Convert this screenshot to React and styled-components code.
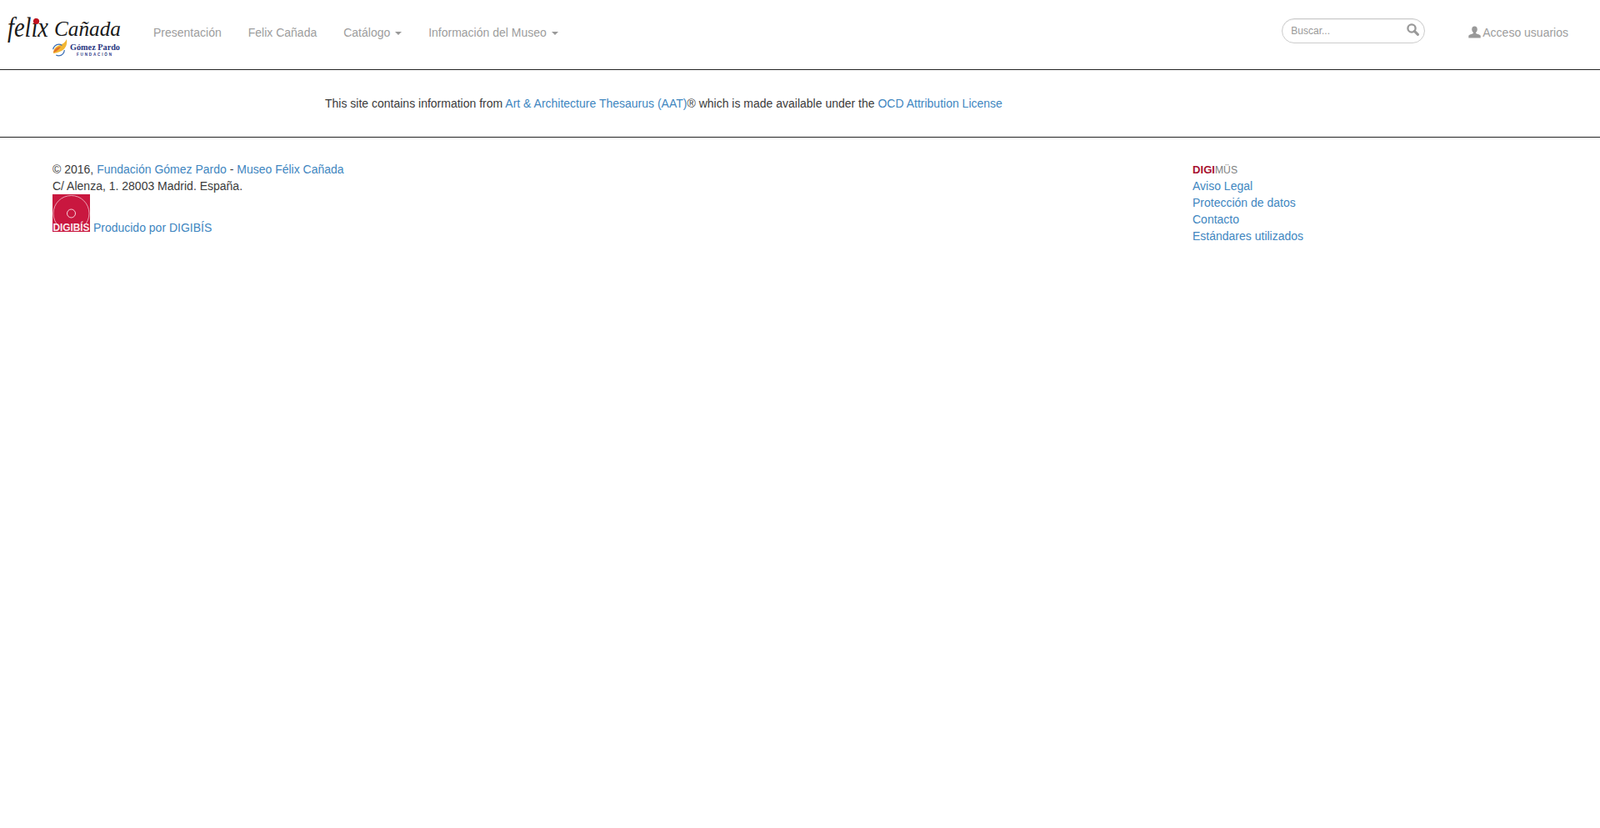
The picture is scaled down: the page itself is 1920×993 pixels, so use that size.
import React from "react";
import styled, { createGlobalStyle } from "styled-components";

const GlobalStyle = createGlobalStyle`
    html, body {
        margin: 0;
        padding: 0;
        background: #fff;
    }
    body {
        font-family: "Liberation Sans", Arial, sans-serif;
        font-size: 14px;
        line-height: 20px;
        color: #3a3a3a;
    }
    a {
        color: #4086bf;
        text-decoration: none;
    }
`;

const Navbar = styled.nav`
    display: flex;
    align-items: flex-start;
    height: 83px;
    border-bottom: 1px solid #222;
`;

const Brand = styled.a`
    display: block;
    flex: none;
    width: 168px;
    height: 83px;
`;

const NavList = styled.ul`
    display: flex;
    flex: 1;
    margin: 0;
    padding: 0;
    list-style: none;
`;

const NavLink = styled.a`
    display: block;
    padding: 29px 16px 0;
    color: #9d9d9d;
`;

const Caret = styled.span`
    display: inline-block;
    width: 0;
    height: 0;
    margin-left: 2px;
    vertical-align: middle;
    border-top: 4px solid #999;
    border-right: 4px solid transparent;
    border-left: 4px solid transparent;
`;

const SearchBox = styled.form`
    position: relative;
    flex: none;
    width: 172px;
    height: 30px;
    margin-top: 22px;
`;

const SearchInput = styled.input`
    box-sizing: border-box;
    width: 100%;
    height: 100%;
    padding: 0 28px 0 10px;
    border: 1px solid #ccc;
    border-radius: 15px;
    outline: none;
    font-family: inherit;
    font-size: 12px;
    color: #555;
    box-shadow: inset 0 1px 1px rgba(0, 0, 0, 0.075);
    &::placeholder {
        color: #999;
        opacity: 1;
    }
`;

const SearchIcon = styled.svg`
    position: absolute;
    top: 6px;
    right: 7px;
    width: 15px;
    height: 15px;
`;

const UserLink = styled.a`
    display: flex;
    flex: none;
    align-items: center;
    gap: 2px;
    margin-left: 52px;
    padding: 29px 38px 0 0;
    color: #9d9d9d;
`;

const UserIcon = styled.svg`
    width: 15px;
    height: 15px;
    margin-top: -1px;
`;

const Notice = styled.section`
    padding: 30px 0 30px 390px;
    border-bottom: 1px solid #222;
`;

const Footer = styled.footer`
    display: flex;
    justify-content: space-between;
    padding: 28px 0 0 63px;
`;

const FooterLeft = styled.div`
    width: 600px;
`;

const FooterRight = styled.div`
    width: 489px;
`;

const FooterLine = styled.div`
    height: 20px;
`;

const DigibisMark = styled.svg`
    width: 45px;
    height: 45px;
    overflow: visible;
`;

const Digimus = styled.svg`
    display: block;
    width: 56px;
    height: 20px;
`;

const Logo = () => (
    <svg width="168" height="83" viewBox="0 0 168 83">
        <g fontFamily='"Liberation Serif", serif' fontStyle="italic" fill="#1a1a1a">
            <text x="9" y="44" fontSize="34" textLength="49" lengthAdjust="spacingAndGlyphs">felix</text>
            <text x="65" y="43" fontSize="25" textLength="80" lengthAdjust="spacingAndGlyphs">Cañada</text>
        </g>
        <circle cx="43.5" cy="25.5" r="3.6" fill="#c1121f" />
        <path d="M80 47c1 6-1 11-6 14-4 2-8 3-10 3 0-6 4-9 8-10 3-1 6-3 8-7z" fill="#f2b632" />
        <path d="M64 63c1-4 5-7 9-7-2 3-5 6-9 7z" fill="#e2702a" />
        <circle cx="70.5" cy="60" r="6.8" fill="none" stroke="#3c6fb4" strokeWidth="1.2" strokeDasharray="14 8" />
        <text x="84" y="60" fontFamily='"Liberation Serif", serif' fontWeight="700" fontSize="9.5" fill="#27347f" textLength="60" lengthAdjust="spacingAndGlyphs">Gómez Pardo</text>
        <text x="92" y="66.5" fontFamily='"Liberation Sans", sans-serif' fontWeight="700" fontSize="4.5" fill="#27347f" textLength="42">FUNDACIÓN</text>
    </svg>
);

const App = () => (
    <>
        <GlobalStyle />
        <Navbar>
            <Brand href="#">
                <Logo />
            </Brand>
            <NavList>
                <li><NavLink href="#">Presentación</NavLink></li>
                <li><NavLink href="#">Felix Cañada</NavLink></li>
                <li><NavLink href="#">Catálogo <Caret /></NavLink></li>
                <li><NavLink href="#">Información del Museo <Caret /></NavLink></li>
            </NavList>
            <SearchBox>
                <SearchInput placeholder="Buscar..." />
                <SearchIcon viewBox="0 0 15 15">
                    <circle cx="6" cy="6" r="4.6" fill="none" stroke="#999" strokeWidth="2.3" />
                    <path d="M9.4 9.4L13.4 13.4" stroke="#999" strokeWidth="3" strokeLinecap="round" />
                </SearchIcon>
            </SearchBox>
            <UserLink href="#">
                <UserIcon viewBox="0 0 15 15">
                    <path d="M7.500 .6C5.300 .6 4.200 2.200 4.200 4.300c0 1.500.7 2.900 1.700 3.700v1C4 9.900.8 10.500.3 11.800v2.800h14.400v-2.800c-.5-1.300-3.700-1.900-5.600-2.800V8c1-.8 1.700-2.200 1.700-3.700C10.800 2.200 9.700 .6 7.500 .6z" fill="#999" />
                </UserIcon>
                Acceso usuarios
            </UserLink>
        </Navbar>
        <Notice>
            This site contains information from <a href="#">Art &amp; Architecture Thesaurus (AAT)</a>® which is made available under the <a href="#">OCD Attribution License</a>
        </Notice>
        <Footer>
            <FooterLeft>
                <FooterLine>© 2016, <a href="#">Fundación Gómez Pardo</a> - <a href="#">Museo Félix Cañada</a></FooterLine>
                <FooterLine>C/ Alenza, 1. 28003 Madrid. España.</FooterLine>
                <div>
                    <DigibisMark viewBox="0 0 45 45">
                        <rect width="45" height="45" fill="#c9173f" />
                        <circle cx="22.500" cy="23" r="21.500" fill="none" stroke="#f3c4cf" strokeWidth="0.8" />
                        <circle cx="22.500" cy="23" r="5" fill="none" stroke="#f6d5dc" strokeWidth="1" />
                        <rect y="35" width="45" height="10" fill="#c9173f" />
                        <text x="0.500" y="44" fontFamily='"Liberation Sans", sans-serif' fontWeight="700" fontSize="12" fill="#fbe9ed" textLength="44" lengthAdjust="spacingAndGlyphs">DIGIBÍS</text>
                    </DigibisMark>
                    {" "}
                    <a href="#">Producido por DIGIBÍS</a>
                </div>
            </FooterLeft>
            <FooterRight>
                <Digimus viewBox="0 0 56 20">
                    <text x="0" y="15" fontFamily='"Liberation Sans", sans-serif' fontWeight="700" fontSize="12" fill="#a8112f" textLength="27" lengthAdjust="spacingAndGlyphs">DIGI</text>
                    <text x="27" y="15" fontFamily='"Liberation Sans", sans-serif' fontSize="12" fill="#808080" textLength="27" lengthAdjust="spacingAndGlyphs">MÜS</text>
                </Digimus>
                <FooterLine><a href="#">Aviso Legal</a></FooterLine>
                <FooterLine><a href="#">Protección de datos</a></FooterLine>
                <FooterLine><a href="#">Contacto</a></FooterLine>
                <FooterLine><a href="#">Estándares utilizados</a></FooterLine>
            </FooterRight>
        </Footer>
    </>
);

export default App;
